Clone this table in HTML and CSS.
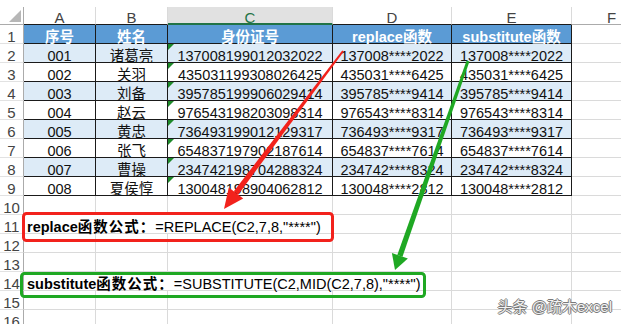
FILE: index.html
```html
<!DOCTYPE html>
<html lang="zh">
<head>
<meta charset="utf-8">
<title>replace vs substitute</title>
<link rel="stylesheet" href="styles.css">
</head>
<body>
<div class="sheet">
  <div class="grid">
    <div class="corner"><span class="tri"></span></div>
    <div class="ch top">A</div>
    <div class="ch top">B</div>
    <div class="ch sel">C</div>
    <div class="ch top">D</div>
    <div class="ch top">E</div>
    <div class="ch">F</div>

    <div class="rh">1</div>
    <div class="t hd">序号</div><div class="t hd">姓名</div><div class="t hd">身份证号</div><div class="t hd">replace函数</div><div class="t hd">substitute函数</div><div class="g"></div>

    <div class="rh">2</div>
    <div class="t b">001</div><div class="t b">诸葛亮</div><div class="t b tx">137008199012032022</div><div class="t b">137008****2022</div><div class="t b">137008****2022</div><div class="g"></div>
    <div class="rh">3</div>
    <div class="t">002</div><div class="t">关羽</div><div class="t tx">435031199308026425</div><div class="t">435031****6425</div><div class="t">435031****6425</div><div class="g"></div>
    <div class="rh">4</div>
    <div class="t b">003</div><div class="t b">刘备</div><div class="t b tx">395785199906029414</div><div class="t b">395785****9414</div><div class="t b">395785****9414</div><div class="g"></div>
    <div class="rh">5</div>
    <div class="t">004</div><div class="t">赵云</div><div class="t tx">976543198203098314</div><div class="t">976543****8314</div><div class="t">976543****8314</div><div class="g"></div>
    <div class="rh">6</div>
    <div class="t b">005</div><div class="t b">黄忠</div><div class="t b tx">736493199012129317</div><div class="t b">736493****9317</div><div class="t b">736493****9317</div><div class="g"></div>
    <div class="rh">7</div>
    <div class="t">006</div><div class="t">张飞</div><div class="t tx">654837197902187614</div><div class="t">654837****7614</div><div class="t">654837****7614</div><div class="g"></div>
    <div class="rh">8</div>
    <div class="t b">007</div><div class="t b">曹操</div><div class="t b tx">234742198704288324</div><div class="t b">234742****8324</div><div class="t b">234742****8324</div><div class="g"></div>
    <div class="rh">9</div>
    <div class="t">008</div><div class="t">夏侯惇</div><div class="t tx">130048198904062812</div><div class="t">130048****2812</div><div class="t">130048****2812</div><div class="g"></div>

    <div class="rh">10</div>
    <div class="g"></div><div class="g"></div><div class="g"></div><div class="g"></div><div class="g"></div><div class="g"></div>
    <div class="rh">11</div>
    <div class="g f s3"><b>replace</b><b class="cjk">函数公式：</b><span>=REPLACE(C2,7,8,"****")</span></div><div class="g"></div><div class="g"></div><div class="g"></div>
    <div class="rh">12</div>
    <div class="g"></div><div class="g"></div><div class="g"></div><div class="g"></div><div class="g"></div><div class="g"></div>
    <div class="rh">13</div>
    <div class="g"></div><div class="g"></div><div class="g"></div><div class="g"></div><div class="g"></div><div class="g"></div>
    <div class="rh">14</div>
    <div class="g f s4"><b>substitute</b><b class="cjk">函数公式：</b><span>=SUBSTITUTE(C2,MID(C2,7,8),"****")</span></div><div class="g"></div><div class="g"></div>
    <div class="rh">15</div>
    <div class="g"></div><div class="g"></div><div class="g"></div><div class="g"></div><div class="g"></div><div class="g"></div>
    <div class="rh">16</div>
    <div class="g"></div><div class="g"></div><div class="g"></div><div class="g"></div><div class="g"></div><div class="g"></div>
  </div>

  <svg class="marks" width="621" height="324" viewBox="0 0 621 324">
    <rect x="23.5" y="213.5" width="309" height="27" rx="3" fill="none" stroke="#f2221c" stroke-width="3"/>
    <rect x="21.5" y="273.5" width="403" height="23" rx="3" fill="none" stroke="#1fa823" stroke-width="3"/>
    <polygon fill="#f2221c" points="343.8,51.6 342.2,50.4 233.8,191.3 238.2,194.7"/>
    <polygon fill="#f2221c" points="243.2,198.4 228.8,187.6 224,209"/>
    <polygon fill="#1fa823" points="469.4,61.5 466.6,60.5 397.3,254.9 402.5,256.7"/>
    <polygon fill="#1fa823" points="407.9,258.6 391.9,253.0 395,270"/>
  </svg>

  <div class="wm">头条 @疏木excel</div>
</div>
</body>
</html>
```

FILE: styles.css
```css
* { box-sizing: border-box; }
html, body { margin: 0; padding: 0; background: #fff; }
body {
  width: 621px;
  height: 324px;
  overflow: hidden;
  font-family: "Liberation Sans", "Noto Sans CJK SC", sans-serif;
}
.sheet {
  position: relative;
  width: 621px;
  height: 324px;
  overflow: hidden;
  padding-top: 7px;
}
.grid {
  display: grid;
  grid-template-columns: 24px 72px 72px 165px 119px 120px 80px;
  grid-template-rows: 18px;
  grid-auto-rows: 19px;
  width: 652px;
}
.grid > div {
  position: relative;
  display: flex;
  justify-content: center;
  align-items: flex-start;
  white-space: nowrap;
  border-right: 1px solid #dadada;
  border-bottom: 1px solid #dadada;
  font-size: 14.5px;
  line-height: 14px;
  padding-top: 5px;
  color: #111;
}

/* column headers */
.grid > .ch {
  font-size: 15px;
  line-height: 17px;
  padding-top: 2px;
  color: #444;
  border-bottom-color: #ababab;
}
.grid > .ch.top { border-bottom-color: #1a1a1a; }
.grid > .ch.sel {
  background: #e1e1e1;
  color: #217346;
  border-bottom: 2px solid #217346;
}
.grid > .corner {
  border-right-color: #ababab;
  border-bottom-color: #ababab;
  padding: 0;
}
.tri {
  position: absolute;
  right: 2px;
  bottom: 2px;
  width: 12px;
  height: 12px;
  background: #b7b7b7;
  clip-path: polygon(100% 0, 100% 100%, 0 100%);
}

/* row headers */
.grid > .rh {
  font-size: 15px;
  color: #444;
  border-right-color: #ababab;
  border-bottom-color: #e2e2e2;
}

/* table cells */
.grid > .t {
  border-right-color: #1a1a1a;
  border-bottom-color: #1a1a1a;
}
.grid > .hd {
  background: #5b9bd5;
  color: #fff;
  font-weight: 700;
}
.grid > .b { background: #ddebf7; }
.grid > .tx::before {
  content: "";
  position: absolute;
  left: 0;
  top: 0;
  width: 6px;
  height: 6px;
  background: #1e8a2a;
  clip-path: polygon(0 0, 100% 0, 0 100%);
}

/* formula rows */
.grid > .f {
  justify-content: flex-start;
  padding-left: 3px;
  color: #000;
}
.grid > .s3 { grid-column: span 3; }
.grid > .s4 { grid-column: span 4; }
.f b { font-weight: 700; }
.f .cjk { letter-spacing: 1px; }

.marks {
  position: absolute;
  left: 0;
  top: 0;
  pointer-events: none;
}

.wm {
  position: absolute;
  right: 9px;
  top: 297px;
  font-size: 15px;
  line-height: 20px;
  color: #f2f2f2;
  text-shadow: 1px 0 0 #7a7a7a, -1px 0 0 #7a7a7a, 0 1px 0 #7a7a7a, 0 -1px 0 #7a7a7a;
  white-space: nowrap;
}
```
